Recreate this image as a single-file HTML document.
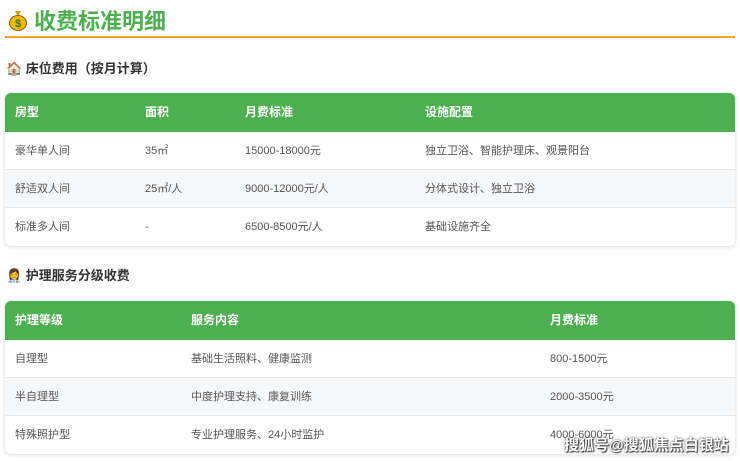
<!DOCTYPE html>
<html><head><meta charset="utf-8"><style>
body{margin:0;width:740px;height:461px;background:#fff;font-family:"Liberation Sans","Noto Sans CJK SC",sans-serif;position:relative;overflow:hidden;color:#555}
.t{position:absolute;left:8px;top:4px;font-size:22px;font-weight:bold;color:#4caf50;display:flex;align-items:center;gap:6px}
.line{position:absolute;left:5px;top:36px;width:730px;height:2px;background:#f5a623}
.h{position:absolute;left:6px;font-size:13px;font-weight:bold;color:#333}
.tb{position:absolute;left:5px;width:730px;border-radius:6px;overflow:hidden;box-shadow:0 1px 4px rgba(0,0,0,.15);font-size:11px}
.r{position:relative;height:38px;border-bottom:1px solid #e8e8e8;box-sizing:border-box}
.r span{position:absolute;top:0;line-height:38px}
.hd{background:#4caf50;color:#fff;font-weight:bold;font-size:12px;height:39px;border:none}
.alt{background:#f7f8fa}
.wm{position:absolute;left:564px;top:434px;font-size:15px;color:#fff;font-weight:bold;white-space:nowrap;text-shadow:0 0 2px #333,1px 1px 1px #333}
</style></head><body>
<div class="t"><svg width="20" height="22" viewBox="0 0 20 22"><path d="M7 2h6l-2 4h-2z" fill="#e0a000"/><ellipse cx="10" cy="14" rx="8.5" ry="7.5" fill="#f5b800" stroke="#8a5a00" stroke-width="1"/><text x="10" y="18" font-size="11" font-weight="bold" text-anchor="middle" fill="#2a7a2a">$</text></svg>收费标准明细</div>
<div class="line"></div>
<div class="h" style="top:58px">🏠 床位费用（按月计算）</div>
<div class="tb" style="top:93px">
<div class="r hd"><span style="left:10px">房型</span><span style="left:140px">面积</span><span style="left:240px">月费标准</span><span style="left:420px">设施配置</span></div>
<div class="r"><span style="left:10px">豪华单人间</span><span style="left:140px">35㎡</span><span style="left:240px">15000-18000元</span><span style="left:420px">独立卫浴、智能护理床、观景阳台</span></div>
<div class="r alt"><span style="left:10px">舒适双人间</span><span style="left:140px">25㎡/人</span><span style="left:240px">9000-12000元/人</span><span style="left:420px">分体式设计、独立卫浴</span></div>
<div class="r" style="border:none"><span style="left:10px">标准多人间</span><span style="left:140px">-</span><span style="left:240px">6500-8500元/人</span><span style="left:420px">基础设施齐全</span></div>
</div>
<div class="h" style="top:265px">👩‍⚕️ 护理服务分级收费</div>
<div class="tb" style="top:301px">
<div class="r hd"><span style="left:10px">护理等级</span><span style="left:186px">服务内容</span><span style="left:545px">月费标准</span></div>
<div class="r"><span style="left:10px">自理型</span><span style="left:186px">基础生活照料、健康监测</span><span style="left:545px">800-1500元</span></div>
<div class="r alt"><span style="left:10px">半自理型</span><span style="left:186px">中度护理支持、康复训练</span><span style="left:545px">2000-3500元</span></div>
<div class="r" style="border:none"><span style="left:10px">特殊照护型</span><span style="left:186px">专业护理服务、24小时监护</span><span style="left:545px">4000-6000元</span></div>
</div>
<div class="wm">搜狐号@搜狐焦点白银站</div>
</body></html>
